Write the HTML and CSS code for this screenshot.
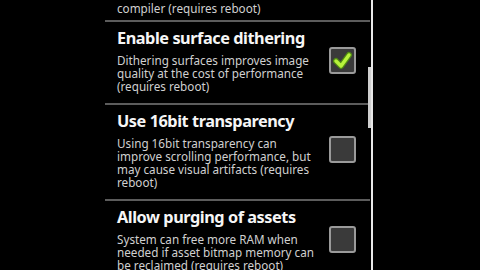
FILE: index.html
```html
<!DOCTYPE html>
<html>
<head>
<meta charset="utf-8">
<link rel="stylesheet" href="styles.css">
</head>
<body>
<div class="frame">
  <div class="screen">
    <div class="list">
      <div class="item partial">
        <div class="summary">compiler (requires reboot)</div>
      </div>
      <div class="item">
        <div class="text">
          <div class="title">Enable surface dithering</div>
          <div class="summary">Dithering surfaces improves image quality at the cost of performance (requires reboot)</div>
        </div>
        <div class="box checked">
          <svg width="23" height="23" viewBox="0 0 23 23"><polyline points="5,12 10,17 18,6" fill="none" stroke="#4f8a12" stroke-width="6" stroke-linecap="round" stroke-linejoin="round"/><polyline points="5,12 10,17 18,6" fill="none" stroke="#b8f23c" stroke-width="3.5" stroke-linecap="round" stroke-linejoin="round"/></svg>
        </div>
      </div>
      <div class="item">
        <div class="text">
          <div class="title">Use 16bit transparency</div>
          <div class="summary">Using 16bit transparency can improve scrolling performance, but may cause visual artifacts (requires reboot)</div>
        </div>
        <div class="box"></div>
      </div>
      <div class="item">
        <div class="text">
          <div class="title">Allow purging of assets</div>
          <div class="summary">System can free more RAM when needed if asset bitmap memory can be reclaimed (requires reboot)</div>
        </div>
        <div class="box"></div>
      </div>
    </div>
    <div class="scrollbar"></div>
  </div>
</div>
</body>
</html>
```
FILE: styles.css
```css
html, body {
  margin: 0;
  padding: 0;
  background: #000;
}
.frame {
  width: 480px;
  height: 270px;
  overflow: hidden;
  background: #000;
  display: flex;
}
.screen {
  position: relative;
  margin-left: 105px;
  width: 265px;
  height: 270px;
  padding-right: 1px;
  border-right: 2px solid #e8e8e8;
  overflow: hidden;
}
.list {
  display: flex;
  flex-direction: column;
}
.item {
  display: flex;
  align-items: center;
  padding: 5px 14px 10px 12px;
  border-bottom: 2px solid #5c5c5c;
}
.item.partial {
  padding: 2px 14px 5px 12px;
}
.text {
  flex: 1;
}
.title {
  font-family: "Noto Sans", "Open Sans", sans-serif;
  font-size: 16.3px;
  font-weight: 700;
  letter-spacing: -0.45px;
  line-height: 22px;
  color: #f6f6f6;
  margin-bottom: 5px;
  white-space: nowrap;
}
.summary {
  font-family: "Noto Sans", "Open Sans", sans-serif;
  font-size: 11.7px;
  line-height: 13px;
  color: #d0d0d0;
  width: 202px;
}
.box {
  width: 23px;
  height: 23px;
  border: 2px solid #9a9a9a;
  border-radius: 3px;
  background: #3a3a3a;
  flex: none;
  display: flex;
}
.scrollbar {
  position: absolute;
  left: 263px;
  top: 67px;
  width: 3px;
  height: 61px;
  background: #cfcfcf;
}
```
